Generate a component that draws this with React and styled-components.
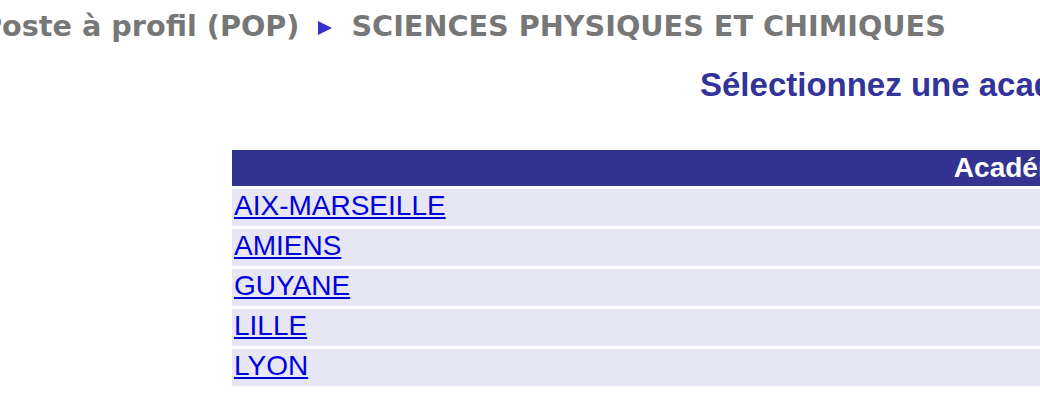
import React from "react";
import styled, { createGlobalStyle } from "styled-components";

const GlobalStyle = createGlobalStyle`
  html, body {
    margin: 0;
    padding: 0;
    background: #ffffff;
    overflow: hidden;
  }
  body {
    width: 1040px;
    height: 418px;
  }
`;

const Page = styled.div`
  width: 1040px;
  height: 418px;
  overflow: hidden;
  font-family: "Liberation Sans", Arial, sans-serif;
`;

const Breadcrumb = styled.div`
  display: flex;
  align-items: center;
  gap: 19px;
  margin-left: -19px;
  padding-top: 8px;
  height: 36px;
  white-space: nowrap;
  font-family: "DejaVu Sans", Verdana, sans-serif;
  font-weight: bold;
  font-size: 28.7px;
  color: #777777;
`;

const Arrow = styled.span`
  display: inline-block;
  width: 0;
  height: 0;
  border-top: 7px solid transparent;
  border-bottom: 7px solid transparent;
  border-left: 14px solid #3333cc;
  margin-top: 4px;
`;

const Title = styled.h2`
  margin: 0;
  padding: 24px 0 0 700px;
  white-space: nowrap;
  font-size: 33px;
  font-weight: bold;
  color: #333399;
  line-height: 34px;
`;

const Table = styled.div`
  display: flex;
  flex-direction: column;
  gap: 3px;
  margin: 48px 0 0 232px;
  width: 1576px;
`;

const HeaderCell = styled.div`
  height: 36px;
  line-height: 36px;
  background: #333391;
  color: #ffffff;
  font-size: 28px;
  font-weight: bold;
  text-align: center;
`;

const Row = styled.div`
  height: 37px;
  line-height: 34px;
  background: #e6e6f5;
  padding-left: 2px;
`;

const Link = styled.a`
  font-size: 28px;
  color: #0000dd;
  text-decoration: underline;
`;

const academies = ["AIX-MARSEILLE", "AMIENS", "GUYANE", "LILLE", "LYON"];

const App = () => {
  return (
    <Page>
      <GlobalStyle />
      <Breadcrumb>
        <span>Poste à profil (POP)</span>
        <Arrow />
        <span>SCIENCES PHYSIQUES ET CHIMIQUES</span>
      </Breadcrumb>
      <Title>Sélectionnez une académie</Title>
      <Table>
        <HeaderCell>Académie</HeaderCell>
        {academies.map((name) => (
          <Row key={name}>
            <Link href="#">{name}</Link>
          </Row>
        ))}
      </Table>
    </Page>
  );
};

export default App;
